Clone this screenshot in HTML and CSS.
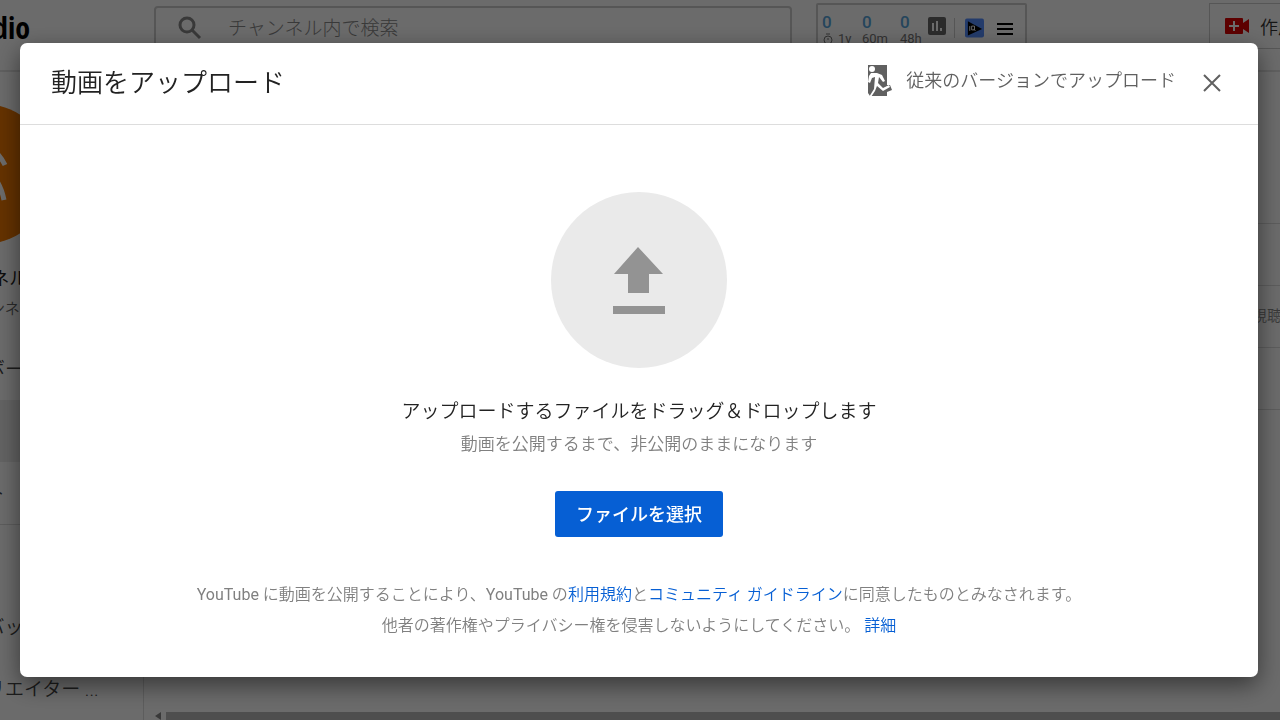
FILE: index.html
```html
<!DOCTYPE html>
<html lang="ja">
<head>
<meta charset="utf-8">
<meta name="viewport" content="width=device-width, initial-scale=1">
<title>動画をアップロード</title>
<link rel="stylesheet" href="styles.css">
</head>
<body>
<div class="app">
  <header class="topbar">
    <div class="brand"><span class="brand-name">Studio</span></div>
    <label class="search">
      <svg class="search-icon" viewBox="0 0 24 24" aria-hidden="true"><circle cx="9" cy="9" r="7"/><path d="M14 14l8 8"/></svg>
      <input class="search-input" type="search" placeholder="チャンネル内で検索" aria-label="チャンネル内で検索">
    </label>
    <div class="stats">
      <div class="stat"><b>0</b><span><svg class="timer" viewBox="0 0 12 12" aria-hidden="true"><circle cx="6" cy="7" r="4"/><path d="M4 1h4M6 5v2"/></svg> 1y</span></div>
      <div class="stat"><b>0</b><span>60m</span></div>
      <div class="stat"><b>0</b><span>48h</span></div>
      <svg class="chart" viewBox="0 0 18 18" aria-hidden="true"><rect width="18" height="18" rx="2" fill="#686868"/><path d="M5 6v8M9 4v10M13 11v3" stroke="#fff" stroke-width="2"/></svg>
      <svg class="iq" viewBox="0 0 20 20" aria-hidden="true"><rect width="20" height="20" rx="2" fill="#558eff"/><path d="M3 3l15 8-15 7z" fill="#000"/><path d="M5 8v5M7 8h3v4H7zM9 11l2 2" stroke="#fff" fill="none"/></svg>
      <svg class="menu" viewBox="0 0 16 14" aria-hidden="true"><path d="M0 2h16M0 7h16M0 12h16" stroke="#000" stroke-width="2"/></svg>
    </div>
    <button class="create" type="button">
      <svg class="camera" viewBox="0 0 24 16" aria-hidden="true"><path d="M1 0h16q1 0 1 1v4l6-4v14l-6-4v4q0 1-1 1H1q-1 0-1-1V1q0-1 1-1z" fill="#d00"/><path d="M9 3v10M4 8h10" stroke="#fff" stroke-width="2"/></svg>
      <span>作成</span>
    </button>
  </header>
  <div class="body">
    <nav class="sidebar">
      <div class="profile">
        <svg class="avatar" viewBox="0 0 140 140" aria-hidden="true"><circle cx="70" cy="70" r="70" fill="#f07800"/><path d="M77 40q9 5 15 17M80 68q8 9 11 24M50 40q-10 24-14 54" transform="translate(0 4)" fill="none" stroke="#fff" stroke-width="5"/></svg>
        <span class="profile-name">チャンネル</span>
        <span class="profile-sub">マイチャンネル</span>
      </div>
      <a class="nav-item" href="#">ダッシュボード</a>
      <a class="nav-item active" href="#">動画</a>
      <a class="nav-item" href="#">再生リスト</a>
      <div class="nav-foot">
        <a class="nav-item" href="#">フィードバック</a>
        <a class="nav-item" href="#">従来のクリエイター ...</a>
      </div>
    </nav>
    <main class="content">
      <div class="row tall"></div>
      <div class="row"></div>
      <div class="row">視聴回数</div>
      <div class="row"></div>
      <div class="scrollbar"><svg class="scroll-arrow" viewBox="0 0 8 8" aria-hidden="true"><path d="M7 0v8L1 4z"/></svg><div class="thumb"></div></div>
    </main>
  </div>
</div>

<div class="scrim">
  <section class="dialog" role="dialog" aria-modal="true" aria-labelledby="dialog-title">
    <header class="dialog-head">
      <h1 class="title" id="dialog-title">動画をアップロード</h1>
      <button class="classic" type="button">
        <svg class="exit" viewBox="0 0 24 32" aria-hidden="true"><path d="M0 0h19v20h3l2 5-5 2v4H2l-2-3z" fill="#606060"/><circle cx="4" cy="4" r="3" fill="#fff"/><path d="M3 8h6l5 2 3 6-2 1-4-5-1 6 5 5 6-3 1 2-7 4-6-5-2 5-4 6H1l5-8 1-12-3 1-2 5-2-1 1-6z" fill="#fff"/></svg>
        <span>従来のバージョンでアップロード</span>
      </button>
      <button class="close" type="button" aria-label="閉じる"><svg viewBox="0 0 20 20" aria-hidden="true"><path d="M2 2l16 16M18 2L2 18"/></svg></button>
    </header>
    <div class="dialog-body">
      <svg class="upload" viewBox="0 0 176 176" aria-hidden="true"><circle cx="88" cy="88" r="88" fill="#eaeaea"/><path d="M87 55l25 27H98v19H77V82H63zM62 114h52v8H62z" fill="#939393"/></svg>
      <p class="lead">アップロードするファイルをドラッグ＆ドロップします</p>
      <p class="sub">動画を公開するまで、非公開のままになります</p>
      <button class="select" type="button">ファイルを選択</button>
      <p class="legal"><span class="latin">YouTube</span> に動画を公開することにより、<span class="latin">YouTube</span> の<a href="#">利用規約</a>と<a href="#">コミュニティ ガイドライン</a>に同意したものとみなされます。<br>他者の著作権やプライバシー権を侵害しないようにしてください。 <a href="#">詳細</a></p>
    </div>
  </section>
</div>
</body>
</html>
```

FILE: styles.css
```css
* { box-sizing: border-box; }
body {
  margin: 0;
  font-family: Roboto, "Noto Sans CJK JP", sans-serif;
  font-weight: 350;
  color: #333;
  overflow: hidden;
}
button { font: inherit; border: 0; background: none; padding: 0; color: inherit; cursor: pointer; }
a { text-decoration: none; }
p, h1 { margin: 0; }
svg { display: block; flex: none; }

.app { height: 100vh; display: flex; flex-direction: column; background: #fff; }
.topbar {
  flex: none;
  height: 72px;
  display: flex;
  align-items: flex-start;
  border-bottom: 2px solid #e4e4e4;
  overflow: hidden;
}
.brand { width: 154px; display: flex; overflow: hidden; flex: none; }
.brand-name {
  width: 30px;
  display: flex;
  justify-content: flex-end;
  font: 700 30px/56px "Open Sans Condensed", "Roboto Condensed", Roboto, sans-serif;
  color: #000;
}
.search {
  flex: 1;
  height: 44px;
  margin-top: 6px;
  padding-left: 22px;
  display: flex;
  align-items: center;
  gap: 26px;
  border: 2px solid #ccc;
  border-radius: 4px;
}
.search-icon { width: 24px; height: 24px; fill: none; stroke: #888; stroke-width: 3; }
.search-input { flex: 1; border: 0; outline: 0; background: none; font: inherit; font-size: 19px; font-weight: 300; padding: 0; }
.search-input::placeholder { color: #888; opacity: 1; }
.stats {
  width: 211px;
  height: 60px;
  margin: 3px 182px 0 24px;
  padding: 8px 4px;
  display: flex;
  align-items: flex-start;
  border: 2px solid #ccc;
  border-radius: 2px;
  flex: none;
}
.stat { width: 38px; display: flex; flex-direction: column; font-size: 13px; line-height: 16px; font-weight: 400; color: #777; }
.stat:first-child { width: 40px; }
.stat:nth-child(3) { width: 28px; }
.stat b { font-size: 17px; line-height: 18px; font-weight: 500; color: #59a5dc; }
.stat span { display: flex; gap: 4px; align-items: center; }
.timer { width: 12px; height: 12px; fill: none; stroke: #777; }
.chart { width: 18px; height: 18px; margin: 4px 8px 0 0; }
.iq { width: 30px; height: 20px; margin-top: 5px; padding-left: 10px; border-left: 1px solid #ccc; }
.menu { width: 16px; height: 14px; margin: 9px 0 0 13px; }
.create {
  width: 71px;
  height: 46px;
  margin-top: 3px;
  padding-left: 15px;
  display: flex;
  align-items: center;
  gap: 11px;
  border: 1px solid #ccc;
  border-right: 0;
  font-size: 18px;
  overflow: hidden;
  white-space: nowrap;
  flex: none;
}
.camera { width: 24px; height: 16px; }

.body { flex: 1; display: flex; min-height: 0; overflow: hidden; }
.sidebar {
  width: 322px;
  margin-left: -178px;
  flex: none;
  display: flex;
  flex-direction: column;
  border-right: 1px solid #ddd;
}
.profile { height: 266px; padding-top: 32px; display: flex; flex-direction: column; align-items: center; flex: none; }
.avatar { width: 140px; height: 140px; }
.profile-name { margin-top: 20px; font-size: 18px; line-height: 30px; font-weight: 400; color: #222; }
.profile-sub { font-size: 15px; line-height: 30px; color: #666; }
.nav-item { height: 62px; padding: 0 0 4px 88px; display: flex; align-items: center; font-size: 19px; color: #444; flex: none; }
.active { background: #ececec; }
.nav-foot { flex: 1; display: flex; flex-direction: column; justify-content: flex-end; border-top: 1px solid #ddd; }
.content { flex: 1; display: flex; flex-direction: column; min-width: 0; }
.row {
  height: 62px;
  padding: 0 0 4px calc(100% - 28px);
  display: flex;
  align-items: center;
  border-bottom: 1px solid #ddd;
  font-size: 15px;
  color: #888;
  white-space: nowrap;
  overflow: hidden;
  flex: none;
}
.tall { height: 152px; }
.scrollbar { height: 8px; margin-top: auto; padding-left: 10px; display: flex; gap: 4px; }
.scroll-arrow { width: 8px; height: 8px; fill: #888; }
.thumb { flex: 1; background: #bbb; }

.scrim { position: fixed; inset: 0; padding: 43px 22px 43px 20px; display: flex; background: rgba(0, 0, 0, .58); }
.dialog {
  flex: 1;
  display: flex;
  flex-direction: column;
  background: #fff;
  border-radius: 7px;
  box-shadow: 0 8px 24px rgba(0, 0, 0, .5);
}
.dialog-head { height: 82px; padding: 0 36px 2px 31px; display: flex; align-items: center; border-bottom: 1px solid #ddd; }
.title { flex: 1; font-size: 26px; line-height: 40px; font-weight: 350; color: #222; }
.classic { padding-bottom: 3px; display: flex; align-items: center; gap: 14px; font-size: 18px; line-height: 30px; color: #606060; }
.exit { width: 24px; height: 32px; }
.close { width: 20px; height: 20px; margin-left: 26px; }
.close svg { width: 20px; height: 20px; fill: none; stroke: #606060; stroke-width: 2; }
.dialog-body { flex: 1; padding-top: 67px; display: flex; flex-direction: column; align-items: center; text-align: center; }
.upload { width: 176px; height: 176px; }
.lead { margin-top: 28px; font-size: 19px; line-height: 32px; color: #222; }
.sub { font-size: 17px; line-height: 32px; color: #808080; }
.select {
  height: 46px;
  margin-top: 31px;
  padding: 0 21px 2px;
  background: #065fd4;
  border-radius: 3px;
  color: #fff;
  font-size: 18px;
  font-weight: 500;
}
.legal { margin-top: 42px; font-size: 16px; line-height: 31px; color: #808080; }
.legal a { color: #065fd4; }
.latin { font-weight: 400; }
```
